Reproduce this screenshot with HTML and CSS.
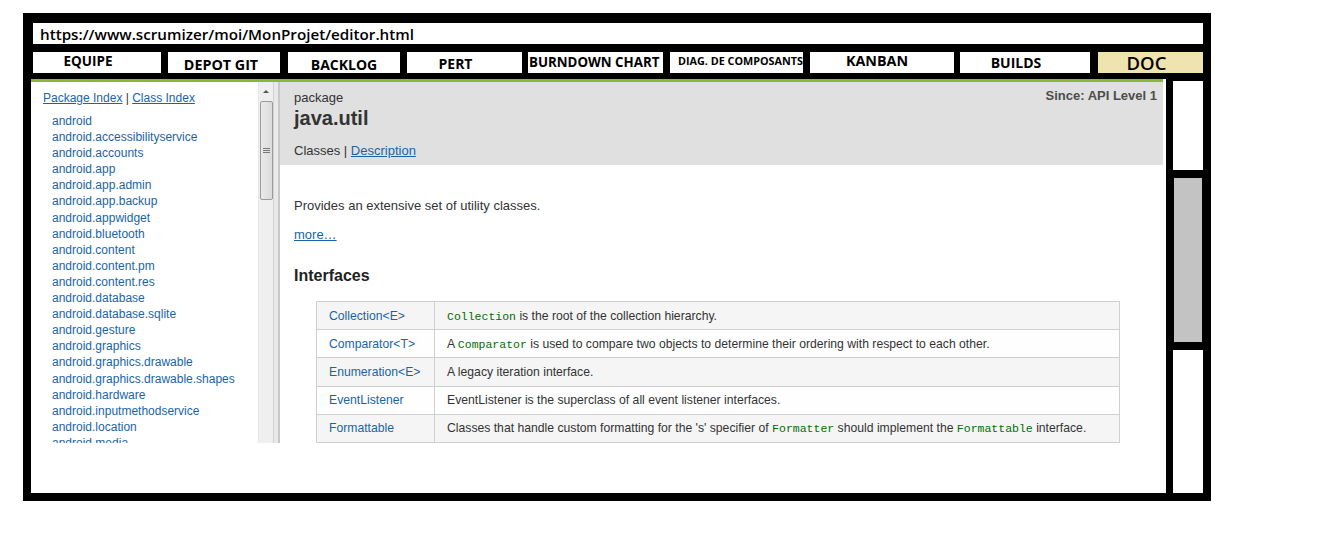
FILE: index.html
```html
<!DOCTYPE html>
<html>
<head>
<meta charset="utf-8">
<title>Scrumizer - DOC</title>
<link rel="stylesheet" href="styles.css">
</head>
<body>
<div class="frame">
  <div class="urlbar">https://www.scrumizer/moi/MonProjet/editor.html</div>
  <div class="tabs">
    <div class="tab t-equipe">EQUIPE</div>
    <div class="tab t-git">DEPOT GIT</div>
    <div class="tab t-backlog">BACKLOG</div>
    <div class="tab t-pert">PERT</div>
    <div class="tab t-burn">BURNDOWN CHART</div>
    <div class="tab t-diag">DIAG. DE COMPOSANTS</div>
    <div class="tab t-kanban">KANBAN</div>
    <div class="tab t-builds">BUILDS</div>
    <div class="tab t-doc">DOC</div>
  </div>
  <div class="workspace">
    <div class="doc">
      <div class="docview">
        <div class="nav">
          <div class="nav-content">
            <div class="nav-index"><a href="#">Package Index</a> | <a href="#">Class Index</a></div>
            <ul class="pkgs">
              <li>android</li>
              <li>android.accessibilityservice</li>
              <li>android.accounts</li>
              <li>android.app</li>
              <li>android.app.admin</li>
              <li>android.app.backup</li>
              <li>android.appwidget</li>
              <li>android.bluetooth</li>
              <li>android.content</li>
              <li>android.content.pm</li>
              <li>android.content.res</li>
              <li>android.database</li>
              <li>android.database.sqlite</li>
              <li>android.gesture</li>
              <li>android.graphics</li>
              <li>android.graphics.drawable</li>
              <li>android.graphics.drawable.shapes</li>
              <li>android.hardware</li>
              <li>android.inputmethodservice</li>
              <li>android.location</li>
              <li>android.media</li>
              <li>android.net</li>
            </ul>
          </div>
          <div class="vscroll">
            <div class="vs-up"><span class="vs-arrow"></span></div>
            <div class="vs-thumb"><span class="grip"></span></div>
          </div>
        </div>
        <div class="splitter"></div>
        <div class="main">
          <div class="header">
            <div class="header-top">
              <span class="pkg-label">package</span>
              <span class="since">Since: API Level 1</span>
            </div>
            <h1 class="pkg-name">java.util</h1>
            <div class="header-links">Classes | <a href="#">Description</a></div>
          </div>
          <div class="body">
            <p class="desc">Provides an extensive set of utility classes.</p>
            <a class="more" href="#">more…</a>
            <h2 class="section">Interfaces</h2>
            <table class="itable">
              <tr class="alt"><td class="c1"><a href="#">Collection</a>&lt;E&gt;</td><td><code>Collection</code> is the root of the collection hierarchy.</td></tr>
              <tr><td class="c1"><a href="#">Comparator</a>&lt;T&gt;</td><td>A <code>Comparator</code> is used to compare two objects to determine their ordering with respect to each other.</td></tr>
              <tr class="alt"><td class="c1"><a href="#">Enumeration</a>&lt;E&gt;</td><td>A legacy iteration interface.</td></tr>
              <tr><td class="c1"><a href="#">EventListener</a></td><td>EventListener is the superclass of all event listener interfaces.</td></tr>
              <tr class="alt"><td class="c1"><a href="#">Formattable</a></td><td>Classes that handle custom formatting for the 's' specifier of <code>Formatter</code> should implement the <code>Formattable</code> interface.</td></tr>
            </table>
          </div>
        </div>
      </div>
    </div>
    <div class="side">
      <div class="side-top"></div>
      <div class="side-thumb"></div>
      <div class="side-bottom"></div>
    </div>
  </div>
</div>
</body>
</html>
```

FILE: styles.css
```css
html, body {
  margin: 0;
  padding: 0;
  background: #fff;
}

.frame {
  margin: 13px 0 0 23px;
  width: 1188px;
  height: 488px;
  box-sizing: border-box;
  background: #000;
  padding: 10px 8px 8px 8px;
  display: flex;
  flex-direction: column;
}

.urlbar {
  margin-left: 2px;
  height: 21px;
  background: #fff;
  font-family: "Open Sans", "DejaVu Sans", sans-serif;
  font-weight: 600;
  font-size: 15.2px;
  line-height: 23px;
  padding-left: 7px;
  color: #000;
  white-space: nowrap;
  overflow: hidden;
}

.tabs {
  display: flex;
  margin-top: 8px;
  margin-left: 2px;
  height: 21px;
}

.tab {
  background: #fff;
  height: 21px;
  box-sizing: border-box;
  font-family: "Open Sans", "DejaVu Sans", sans-serif;
  font-weight: 700;
  font-size: 14px;
  line-height: 21px;
  text-align: center;
  color: #000;
  white-space: nowrap;
  overflow: hidden;
}

.t-equipe { width: 128px; line-height: 18px; font-size: 13.5px; padding-right: 18px; }
.t-git { width: 112px; margin-left: 7px; padding-top: 2px; font-size: 14.3px; padding-right: 6px; }
.t-backlog { width: 112px; margin-left: 8px; padding-top: 2px; }
.t-pert { width: 115px; margin-left: 7px; padding-top: 1px; padding-right: 18px; }
.t-burn { width: 135px; margin-left: 6px; text-align: left; padding-left: 1px; font-size: 13.3px; }
.t-diag { width: 133px; margin-left: 7px; text-align: left; padding-left: 8px; font-size: 10.8px; line-height: 18px; }
.t-kanban { width: 144px; margin-left: 7px; line-height: 18px; font-size: 14.3px; padding-right: 10px; }
.t-builds { width: 130px; margin-left: 6px; font-size: 14px; padding-right: 18px; }
.t-doc {
  width: 105px;
  margin-left: 8px;
  background: #efe4b0;
  font-weight: 600;
  font-size: 18.5px;
  line-height: 21px;
  padding-right: 8px;
}

.workspace {
  display: flex;
  margin-top: 6px;
  flex: 1;
  gap: 7px;
  min-height: 0;
}

.doc {
  width: 1135px;
  background: #fff;
}

.docview {
  width: 1132px;
  height: 364px;
  box-sizing: border-box;
  border-top: 3px solid #8db536;
  display: flex;
  overflow: hidden;
  font-family: "Liberation Sans", Arial, sans-serif;
}

.nav {
  width: 242px;
  display: flex;
  flex: none;
}

.nav-content {
  width: 227px;
  box-sizing: border-box;
  padding: 8px 0 0 12px;
  font-size: 12px;
  line-height: 16px;
  color: #333;
  overflow: hidden;
}

.nav-content a {
  color: #1a64a6;
  text-decoration: underline;
}

.pkgs {
  list-style: none;
  margin: 7px 0 0 0;
  padding: 0 0 0 9px;
}

.pkgs li {
  color: #1a64a6;
  line-height: 16.1px;
  white-space: nowrap;
}

.vscroll {
  width: 15px;
  background: #efefef;
  border-left: 1px solid #e6e6e6;
  box-sizing: border-box;
  display: flex;
  flex-direction: column;
  align-items: center;
}

.vs-up {
  height: 19px;
  width: 100%;
  display: flex;
  align-items: center;
  justify-content: center;
}

.vs-arrow {
  width: 0;
  height: 0;
  border-left: 3px solid transparent;
  border-right: 3px solid transparent;
  border-bottom: 3px solid #555;
}

.vs-thumb {
  width: 13px;
  height: 99px;
  box-sizing: border-box;
  border: 1px solid #9a9a9a;
  border-radius: 2px;
  background: linear-gradient(to right, #e9e9e9, #dcdcdc);
  display: flex;
  align-items: center;
  justify-content: center;
}

.grip {
  width: 7px;
  height: 5px;
  border-top: 1px solid #777;
  border-bottom: 1px solid #777;
  box-sizing: border-box;
  background: linear-gradient(#777, #777) center / 100% 1px no-repeat;
}

.splitter {
  width: 7px;
  flex: none;
  box-sizing: border-box;
  background: #e9e9e9;
  border-left: 1px solid #d2d2d2;
  border-right: 2px solid #c8c8c8;
}

.main {
  width: 883px;
  flex: none;
  display: flex;
  flex-direction: column;
  color: #333;
}

.header {
  height: 83px;
  box-sizing: border-box;
  background: #e0e0e0;
  padding: 8px 6px 0 14px;
}

.header-top {
  display: flex;
  justify-content: space-between;
  align-items: flex-start;
  height: 16px;
}

.pkg-label {
  font-size: 13px;
  line-height: 16px;
}

.since {
  font-size: 13px;
  font-weight: 700;
  color: #4d4d4d;
  line-height: 16px;
  margin-top: -2px;
}

.pkg-name {
  margin: 0;
  font-size: 20px;
  font-weight: 700;
  line-height: 26px;
  color: #333;
  margin-top: -1px;
}

.header-links {
  margin-top: 12px;
  font-size: 13px;
  line-height: 16px;
}

.header-links a {
  color: #1a64a6;
}

.body {
  padding: 0 0 0 14px;
}

.desc {
  margin: 33px 0 0 0;
  font-size: 13px;
  line-height: 16px;
}

.more {
  display: block;
  margin-top: 13px;
  font-size: 13px;
  line-height: 16px;
  color: #1a64a6;
  width: max-content;
}

.section {
  margin: 23px 0 0 0;
  font-size: 16px;
  font-weight: 700;
  line-height: 20px;
  color: #222;
}

.itable {
  margin: 15px 0 0 22px;
  width: 804px;
  border-collapse: collapse;
  font-size: 12.2px;
}

.itable td {
  border: 1px solid #cfcfcf;
  height: 27.2px;
  padding: 0 12px;
  color: #333;
  white-space: nowrap;
  vertical-align: middle;
}

.itable td.c1 {
  width: 93px;
  color: #1a64a6;
}

.itable a {
  color: #1a64a6;
  text-decoration: none;
}

.itable tr {
  background: #fefefe;
}

.itable tr.alt {
  background: #f5f5f5;
}

.itable code {
  font-family: "Liberation Mono", "Courier New", monospace;
  font-size: 11.5px;
  color: #007000;
}

.side {
  width: 30px;
  display: flex;
  flex-direction: column;
  gap: 8px;
  padding-top: 2px;
}

.side-top {
  height: 89px;
  background: #fff;
}

.side-thumb {
  height: 164px;
  margin: 0 1px;
  background: #c3c3c3;
}

.side-bottom {
  flex: 1;
  background: #fff;
}
```
